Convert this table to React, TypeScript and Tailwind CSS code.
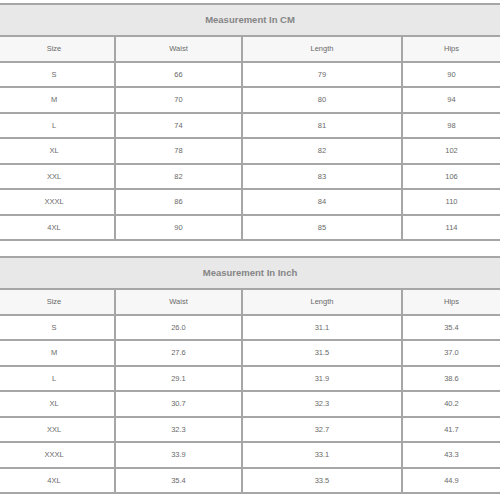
import React from "react";

const sizes = ["S", "M", "L", "XL", "XXL", "XXXL", "4XL"];
const cm = [
  ["66", "79", "90"],
  ["70", "80", "94"],
  ["74", "81", "98"],
  ["78", "82", "102"],
  ["82", "83", "106"],
  ["86", "84", "110"],
  ["90", "85", "114"],
];
const inch = [
  ["26.0", "31.1", "35.4"],
  ["27.6", "31.5", "37.0"],
  ["29.1", "31.9", "38.6"],
  ["30.7", "32.3", "40.2"],
  ["32.3", "32.7", "41.7"],
  ["33.9", "33.1", "43.3"],
  ["35.4", "33.5", "44.9"],
];

function SizeTable({ title, data }: { title: string; data: string[][] }) {
  const header = ["Size", "Waist", "Length", "Hips"];
  return (
    <div className="border-y-2 border-[#a6a6a6]">
      <div className="h-[30px] bg-[#e8e8e8] flex items-center justify-center pt-[1px] text-[9.5px] font-bold text-[#858585]">
        {title}
      </div>
      <div className="grid grid-cols-[114px_125px_158px_97px] gap-[2px] bg-[#a6a6a6] pt-[2px]">
        {header.map((h, i) => (
          <div
            key={h}
            className={`h-[23.5px] bg-[#f7f7f7] flex items-center justify-center text-[7.5px] text-[#6a6a6a] ${i === 0 ? "pr-[6px]" : ""}`}
          >
            {h}
          </div>
        ))}
        {data.map((row, r) => (
          <React.Fragment key={r}>
            <div className="h-[23.5px] bg-white flex items-center justify-center pr-[6px] text-[7.5px] text-[#6a6a6a]">
              {sizes[r]}
            </div>
            {row.map((v, c) => (
              <div
                key={c}
                className="h-[23.5px] bg-white flex items-center justify-center text-[7.5px] text-[#6a6a6a]"
              >
                {v}
              </div>
            ))}
          </React.Fragment>
        ))}
      </div>
    </div>
  );
}

export default function App() {
  return (
    <div className="w-[500px] h-[500px] bg-white overflow-hidden pt-[3px] font-['Liberation_Sans',Arial,sans-serif]">
      <SizeTable title="Measurement In CM" data={cm} />
      <div className="h-[15px]" />
      <SizeTable title="Measurement In Inch" data={inch} />
    </div>
  );
}
